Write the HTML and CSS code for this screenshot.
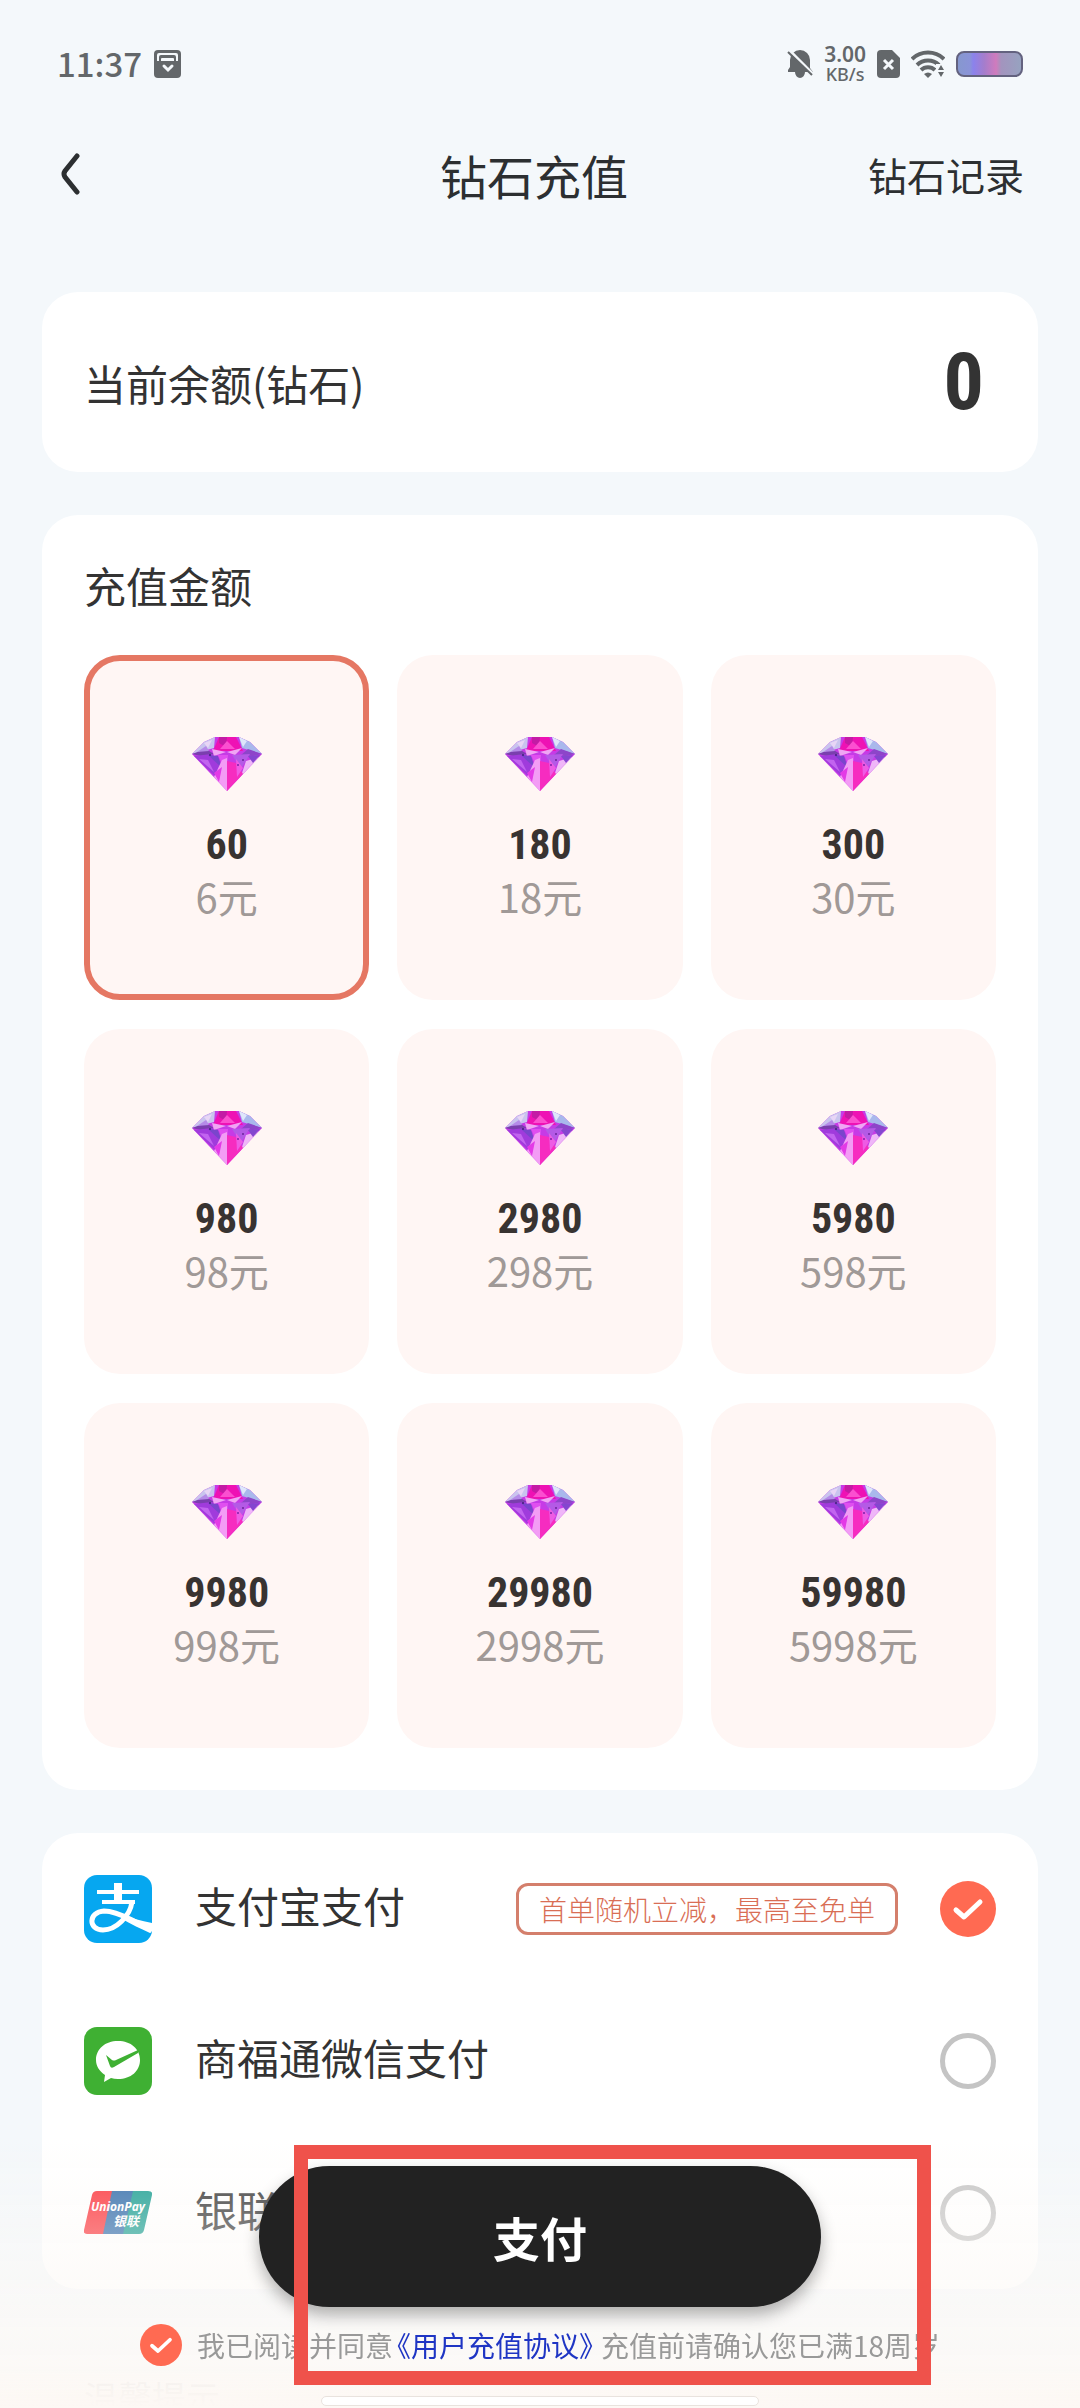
FILE: index.html
```html
<!doctype html>
<html lang="zh-CN">
<head>
	<meta charset="UTF-8">
	<meta name="viewport" content="width=device-width, initial-scale=1">
	<title>钻石充值</title>
	<link rel="stylesheet" href="styles.css">
</head>
<body>
	<!-- 公用钻石图标 -->
	<svg class="defs" width="0" height="0" aria-hidden="true">
		<symbol id="diamond" viewBox="0 0 70 54">
			<path fill="#c63be6" d="M23 0h24l11 5 12 12-35 37L0 17 12 5z"/>
			<path fill="#c9c4ee" d="M23 0 12 5 0 17l22-6z"/>
			<path fill="#a9b8ec" d="M47 0l11 5 12 12-20-6z"/>
			<path fill="#dfe6fb" d="M47 0l8 4-4 6z"/>
			<path fill="#e8d5f6" d="M12 6l8-3-4 8z"/>
			<path fill="#ee12b4" d="M27 0h17l7 14H21z"/>
			<path fill="#c31ba5" d="M27 0h8l-1 10-7-4z"/>
			<path fill="#fb4fd0" d="M35 4l8 8H28z"/>
			<path fill="#7a3fae" d="M0 17l14-5 8 5-9 3z"/>
			<path fill="#b58be8" d="M5 15l9-6 3 5z"/>
			<path fill="#8d45c9" d="M70 17l-14-5-7 6 12 1z"/>
			<path fill="#f0a5f4" d="M20 12l14 3-12 4zM35 15l15-4-7 7z"/>
			<path fill="#a03bdc" d="M2 19l18-2 10 14-6 9z"/>
			<path fill="#7a45cc" d="M16 18l10 1 4 12z"/>
			<path fill="#c264ef" d="M7 22l9 1 6 12z"/>
			<path fill="#e04ff0" d="M26 18h10l-1 20z"/>
			<path fill="#b45ae6" d="M40 18l18-1-9 15z"/>
			<path fill="#efb6f8" d="M67 20L49 39l5-15z"/>
			<path fill="#8446cf" d="M68 18l-7 8-5-7z"/>
			<path fill="#f39cf5" d="M30 23l5-2v33L22 40z"/>
			<path fill="#e33ae6" d="M22 36l8-6-3 15z"/>
			<path fill="#f62cc0" d="M35 24l9 2 7 11-16 17z"/>
			<path fill="#ee5be4" d="M44 22l7 9-6 9z"/>
			<circle cx="46" cy="28" r="1" fill="#7d1fa8"/>
			<circle cx="51" cy="23" r="1" fill="#6b259a"/>
			<circle cx="18" cy="18" r="1" fill="#42217a"/>
		</symbol>
	</svg>

	<div class="page">
		<div class="status">
			<span class="time">11:37</span>
			<svg class="wallet" width="27" height="28" viewBox="0 0 27 28">
				<rect width="27" height="28" rx="4" fill="#63676a"/>
				<path d="M3 11V5a2 2 0 0 1 2-2h17a2 2 0 0 1 2 2v6h-2V7a2 2 0 0 0-2-2H7a2 2 0 0 0-2 2v4z" fill="#f4f8fb"/>
				<path d="M7 11V9q0-1 1-1h11q1 0 1 1v2z" fill="#f4f8fb"/>
				<path d="M10 16l4 4 4-4" fill="none" stroke="#f4f8fb" stroke-width="3" stroke-linecap="round"/>
			</svg>
			<div class="status-right">
				<svg width="26" height="28" viewBox="0 0 26 28">
					<path d="M13 0a10 10 0 0 1 10 10v8l3 4H1v-2l2-3v-7A10 10 0 0 1 13 0zM8 22h10a5 6 0 0 1-10 0z" fill="#63676a"/>
					<path d="M2 0l24 24" stroke="#f4f8fb" stroke-width="3"/>
					<path d="M1 2l24 23" stroke="#63676a" stroke-width="2"/>
				</svg>
				<span class="speed"><b>3.00</b><i>KB/s</i></span>
				<svg width="23" height="28" viewBox="0 0 23 28">
					<path d="M4 0h11l8 8v16a4 4 0 0 1-4 4H4a4 4 0 0 1-4-4V4a4 4 0 0 1 4-4z" fill="#63676a"/>
					<path d="M7 10l9 9M16 10l-9 9" stroke="#f4f8fb" stroke-width="3"/>
				</svg>
				<svg width="34" height="28" viewBox="0 0 34 28">
					<g fill="none" stroke="#63676a" stroke-width="4">
						<path d="M1 9a23 23 0 0 1 32 0"/>
						<path d="M6 15a16 16 0 0 1 22 0"/>
						<path d="M10 20a10 10 0 0 1 14 0"/>
					</g>
					<path d="M13 24q4-3 8 0l-4 4z" fill="#63676a"/>
					<path d="M25 14h9v14h-9z" fill="#f4f8fb"/>
					<path d="M27 20l3-5 3 5zM27 22h6l-3 5z" fill="#63676a"/>
				</svg>
				<svg width="67" height="26" viewBox="0 0 67 26">
					<defs>
						<linearGradient id="power">
							<stop offset="0" stop-color="#8698ce"/>
							<stop offset=".2" stop-color="#8a93d8"/>
							<stop offset=".25" stop-color="#8b82ec"/>
							<stop offset=".42" stop-color="#a57dcc"/>
							<stop offset=".6" stop-color="#d07bbd"/>
							<stop offset=".68" stop-color="#a394be"/>
							<stop offset="1" stop-color="#96a3c0"/>
						</linearGradient>
					</defs>
					<rect x="1" y="1" width="65" height="24" rx="7" fill="url(#power)" stroke="#63627f" stroke-width="2"/>
				</svg>
			</div>
		</div>

		<header class="nav">
			<button class="back" type="button" aria-label="返回">
				<svg width="20" height="44" viewBox="0 0 20 44">
					<path d="M17 4L5 19q-2 3 0 6l12 15" fill="none" stroke="#2c2f31" stroke-width="5" stroke-linecap="round"/>
				</svg>
			</button>
			<h1>钻石充值</h1>
			<a class="record" href="#">钻石记录</a>
		</header>

		<section class="card balance">
			<span>当前余额(钻石)</span>
			<strong>0</strong>
		</section>

		<section class="card amount">
			<h2>充值金额</h2>
			<div class="grid">
				<button type="button" class="item on"><svg><use href="#diamond"/></svg><b>60</b><span>6元</span></button>
				<button type="button" class="item"><svg><use href="#diamond"/></svg><b>180</b><span>18元</span></button>
				<button type="button" class="item"><svg><use href="#diamond"/></svg><b>300</b><span>30元</span></button>
				<button type="button" class="item"><svg><use href="#diamond"/></svg><b>980</b><span>98元</span></button>
				<button type="button" class="item"><svg><use href="#diamond"/></svg><b>2980</b><span>298元</span></button>
				<button type="button" class="item"><svg><use href="#diamond"/></svg><b>5980</b><span>598元</span></button>
				<button type="button" class="item"><svg><use href="#diamond"/></svg><b>9980</b><span>998元</span></button>
				<button type="button" class="item"><svg><use href="#diamond"/></svg><b>29980</b><span>2998元</span></button>
				<button type="button" class="item"><svg><use href="#diamond"/></svg><b>59980</b><span>5998元</span></button>
			</div>
		</section>

		<section class="card pays">
			<label class="pay">
				<svg width="68" height="68" viewBox="0 0 68 68">
					<rect width="68" height="68" rx="13" fill="#06a7f0"/>
					<g fill="none" stroke="#fff">
						<path d="M13 17h42M18 27h33" stroke-width="4"/>
						<path d="M34 8v19" stroke-width="8"/>
						<path d="M48 27C46 41 32 55 19 55 4 55 4 37 20 36c13 0 25 8 34 12" stroke-width="5"/>
					</g>
					<path d="M36 38c11 5 21 8 32 10v8c-1 1-1 2-2 2-9-4-19-9-28-14z" fill="#fff"/>
				</svg>
				<span class="name">支付宝支付</span>
				<em>首单随机立减，最高至免单</em>
				<input type="radio" name="pay" checked>
			</label>
			<label class="pay">
				<svg width="68" height="68" viewBox="0 0 68 68">
					<rect width="68" height="68" rx="13" fill="#3fb033"/>
					<path d="M34 14c13 0 22 8 22 19s-9 19-22 19q-4 0-7-1l-7 4 1-7c-6-4-9-9-9-15 0-11 9-19 22-19z" fill="#fff"/>
					<path d="M22 28l6 5q2 1 4 0l22-10v3L30 40q-3 2-4-1z" fill="#3fb033"/>
				</svg>
				<span class="name">商福通微信支付</span>
				<input type="radio" name="pay">
			</label>
			<label class="pay">
				<svg width="68" height="44" viewBox="0 0 68 44">
					<path d="M13 0h18l-9 43H3q-4 0-3-4L8 4q1-4 5-4z" fill="#fb2f36"/>
					<path d="M28 0h24l-9 43H19z" fill="#2b68a8"/>
					<path d="M49 0h15q5 0 4 4l-8 35q-1 4-5 4H39z" fill="#149c8f"/>
					<text x="7" y="20" class="up-en">UnionPay</text>
					<text x="29" y="35" class="up-cn">银联</text>
				</svg>
				<span class="name">银联支付</span>
				<input type="radio" name="pay">
			</label>
		</section>

		<p class="tips">温馨提示</p>
	</div>

	<footer class="bottom">
		<button type="button" class="submit">支付</button>
		<div class="agree">
			<input type="checkbox" id="agree" checked>
			<label for="agree">我已阅读并同意<a href="#">《用户充值协议》</a>充值前请确认您已满18周岁</label>
		</div>
		<div class="home"></div>
		<div class="mark"></div>
	</footer>
</body>
</html>
```
FILE: styles.css
```css
*{margin:0;padding:0;box-sizing:border-box;}
body{
	background-color:#f4f8fb;
	color:#333;
	font-family:"Noto Sans CJK SC",sans-serif;
	font-size:42px;
}
button{
	border:0;
	background:none;
	font-family:inherit;
	color:inherit;
	cursor:pointer;
}
a{text-decoration:none;color:inherit;}
svg{display:block;flex-shrink:0;}
.defs{position:absolute;}
.page{
	height:100vh;
	padding:0 42px;
	overflow-y:auto;
	scrollbar-width:none;
}

/* 状态栏 */
.status{
	display:flex;
	align-items:center;
	height:128px;
	padding:0 15px;
	color:#63676a;
}
.time{
	padding-bottom:2px;
	font-size:33px;
	font-weight:500;
	line-height:40px;
}
.wallet{margin-left:12px;}
.status-right{
	display:flex;
	align-items:center;
	gap:11px;
	margin-left:auto;
}
.speed{
	display:flex;
	flex-direction:column;
	align-items:center;
	line-height:20px;
	font-family:"Noto Sans",sans-serif;
}
.speed b{font-size:21px;font-weight:600;}
.speed i{font-size:18px;font-style:normal;font-weight:500;}

/* 导航 */
.nav{
	display:grid;
	grid-template-columns:1fr auto 1fr;
	align-items:center;
	height:92px;
	margin-bottom:72px;
	padding:0 14px 0 2px;
	color:#2c2f31;
}
.back{
	display:flex;
	justify-content:flex-start;
	padding-left:16px;
}
.nav h1{font-size:47px;font-weight:400;}
.record{
	justify-self:end;
	font-size:39px;
}

.card{
	margin-bottom:43px;
	padding:0 42px;
	border-radius:36px;
	background-color:#fff;
}
.balance{
	display:flex;
	justify-content:space-between;
	align-items:center;
	height:180px;
}
.balance strong{
	padding-right:12px;
	font-family:"Roboto Condensed","Liberation Sans Narrow","DejaVu Sans Condensed",sans-serif;
	font-size:80px;
}

/* 充值金额 */
.amount{padding-bottom:42px;}
.amount h2{
	height:140px;
	line-height:140px;
	font-size:42px;
	font-weight:400;
}
.grid{
	display:grid;
	grid-template-columns:repeat(3,1fr);
	gap:29px 28px;
}
.item{
	display:flex;
	flex-direction:column;
	align-items:center;
	height:345px;
	padding-top:76px;
	border:6px solid transparent;
	border-radius:36px;
	background-color:#fff6f4;
	background-clip:border-box;
}
.item.on{border-color:#e57763;}
.item svg{
	width:70px;
	height:54px;
}
.item b{
	margin-top:26px;
	font-family:"Roboto Condensed","Liberation Sans Narrow","DejaVu Sans Condensed",sans-serif;
	font-size:42px;
	line-height:56px;
	color:#383331;
}
.item span{
	font-size:40px;
	line-height:46px;
	color:#a09997;
}

/* 支付方式 */
.pay{
	display:flex;
	align-items:center;
	height:152px;
}
.name{
	margin-left:43px;
	padding-bottom:10px;
}
.pay em{
	margin-left:auto;
	padding:0 20px;
	border:3px solid #d47f6c;
	border-radius:12px;
	font-size:28px;
	line-height:46px;
	font-style:normal;
	font-weight:300;
	color:#d96e55;
}
.pay input{
	width:56px;
	height:56px;
	margin-left:auto;
}
.pay em + input{margin-left:42px;}
.up-en{
	font:italic bold 12px "Open Sans",sans-serif;
	fill:#fff;
}
.up-cn{
	font:italic bold 13px "Noto Sans CJK SC",sans-serif;
	fill:#fff;
}
input{
	flex-shrink:0;
	appearance:none;
	border:5px solid #c4c4c4;
	border-radius:50%;
}
input:checked{
	border:0;
	background:#ff6a52 url("data:image/svg+xml,%3Csvg xmlns='http://www.w3.org/2000/svg' viewBox='0 0 56 56'%3E%3Cpath d='M16 29l8 7 16-15' fill='none' stroke='%23fff' stroke-width='5' stroke-linecap='round' stroke-linejoin='round'/%3E%3C/svg%3E") center/100%;
}
.tips{
	margin-top:88px;
	padding-left:42px;
	font-size:34px;
	line-height:40px;
	color:#999;
}

/* 底部 */
.bottom{
	position:fixed;
	left:0;
	right:0;
	bottom:0;
	display:flex;
	flex-direction:column;
	align-items:center;
	padding:36px 0 2px;
	background:linear-gradient(rgba(253,249,246,0),rgba(252,249,246,.9) 85%,#fdf8f4);
}
.submit{
	width:52%;
	height:141px;
	border-radius:71px;
	background-color:#222;
	box-shadow:0 8px 16px rgba(0,0,0,.3);
	font-size:47px;
	font-weight:700;
	color:#fff;
}
.agree{
	display:flex;
	align-items:center;
	gap:15px;
	height:42px;
	margin:17px 0 30px;
	font-size:28px;
	white-space:nowrap;
	color:#999;
}
.agree input{
	width:42px;
	height:42px;
}
.agree a{
	padding:0 8px 0 4px;
	font-feature-settings:"halt";
	color:#1f35c4;
}
.home{
	width:438px;
	height:10px;
	border:1px solid #e9e3de;
	border-radius:5px;
	background-color:#fff;
}
/* 红框标注，盖在按钮上面 */
.mark{
	position:absolute;
	top:15px;
	bottom:23px;
	left:27.2%;
	right:13.8%;
	border:14px solid #ef524b;
	pointer-events:none;
}
```
